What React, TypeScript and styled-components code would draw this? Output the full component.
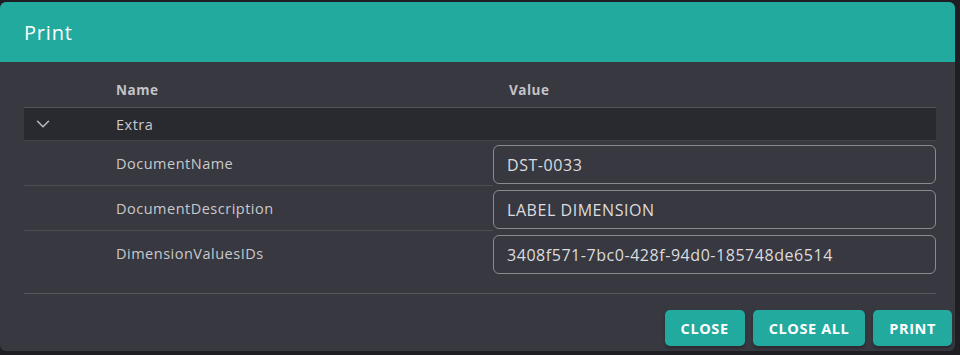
import * as React from 'react';
import styled, { createGlobalStyle } from 'styled-components';
import { ChevronDown } from 'lucide-react';

const fields = [
  { name: 'DocumentName', value: 'DST-0033' },
  { name: 'DocumentDescription', value: 'LABEL DIMENSION' },
  { name: 'DimensionValuesIDs', value: '3408f571-7bc0-428f-94d0-185748de6514' },
];

const App: React.FC = () => {
  return (
    <>
      <GlobalStyle />
      <S.Dialog>
        <S.Header>Print</S.Header>
        <S.Body>
          <S.Table>
            <S.HeadRow>
              <S.Cell />
              <S.HeadCell>Name</S.HeadCell>
              <S.HeadCell>Value</S.HeadCell>
            </S.HeadRow>
            <S.GroupRow>
              <S.Cell>
                <ChevronDown size={22} strokeWidth={1.7} />
              </S.Cell>
              <S.Cell>Extra</S.Cell>
              <S.Cell />
            </S.GroupRow>
            {fields.map(f => (
              <S.Row key={f.name}>
                <S.LabelCell>{f.name}</S.LabelCell>
                <S.InputCell>
                  <S.Input defaultValue={f.value} />
                </S.InputCell>
              </S.Row>
            ))}
          </S.Table>
          <S.Footer>
            <S.Button>Close</S.Button>
            <S.Button>Close all</S.Button>
            <S.Button>Print</S.Button>
          </S.Footer>
        </S.Body>
      </S.Dialog>
    </>
  );
};

const GlobalStyle = createGlobalStyle`
  html, body {
    margin: 0;
    padding: 0;
    background: #1f1f23;
    font-family: 'Open Sans', 'Noto Sans', sans-serif;
  }
  * { box-sizing: border-box; }
`;

const S = {
  Dialog: styled.div`
    margin-top: 2px;
    width: 955px;
    height: 349px;
    border-radius: 6px;
    overflow: hidden;
    background: #383840;
    display: flex;
    flex-direction: column;
  `,
  Header: styled.div`
    height: 60px;
    background: #22aa9f;
    color: #ffffff;
    font-size: 20px;
    letter-spacing: 0.8px;
    padding-left: 24px;
    display: flex;
    align-items: center;
  `,
  Body: styled.div`
    flex: 1;
    padding: 0 3px 0 24px;
    display: flex;
    flex-direction: column;
  `,
  Table: styled.div`
    width: 912px;
    display: flex;
    flex-direction: column;
    border-bottom: 1px solid #55555c;
    padding-bottom: 17px;
    color: #c9c9cd;
    font-size: 14.5px;
    letter-spacing: 0.5px;
  `,
  HeadRow: styled.div`
    height: 46px;
    display: grid;
    grid-template-columns: 92px 393px 1fr;
    align-items: center;
    border-bottom: 1px solid #55555c;
    padding-top: 10px;
  `,
  HeadCell: styled.div`
    font-weight: 700;
    font-size: 13.5px;
    letter-spacing: 0.5px;
    color: #c4c4c8;
  `,
  GroupRow: styled.div`
    height: 33px;
    display: grid;
    grid-template-columns: 92px 393px 1fr;
    align-items: center;
    background: #292930;
    border-bottom: 1px solid #45454c;
  `,
  Cell: styled.div`
    display: flex;
    align-items: center;
    svg {
      margin-left: 8px;
      color: #b8b8bc;
    }
  `,
  Row: styled.div`
    height: 45px;
    display: grid;
    grid-template-columns: 469px 1fr;
  `,
  LabelCell: styled.div`
    padding-left: 92px;
    display: flex;
    align-items: center;
    border-bottom: 1px solid #4d4d54;
    div:last-child > & {
      border-bottom: none;
    }
  `,
  InputCell: styled.div`
    padding: 4px 0 1px;
  `,
  Input: styled.input`
    width: 100%;
    height: 39px;
    border: 1px solid #8a8a90;
    border-radius: 6px;
    background: transparent;
    color: #dcdcdf;
    font-family: inherit;
    font-size: 16px;
    letter-spacing: 0.55px;
    padding: 0 13px;
    outline: none;
  `,
  Footer: styled.div`
    display: flex;
    justify-content: flex-end;
    gap: 8px;
    padding-top: 16px;
  `,
  Button: styled.button`
    height: 36px;
    padding: 0 16px;
    border: none;
    border-radius: 5px;
    background: #22aa9f;
    color: #ffffff;
    font-family: inherit;
    font-weight: 700;
    font-size: 14.5px;
    letter-spacing: 0.6px;
    text-transform: uppercase;
    box-shadow: 0 2px 3px rgba(0, 0, 0, 0.3);
  `,
};

export default App;
